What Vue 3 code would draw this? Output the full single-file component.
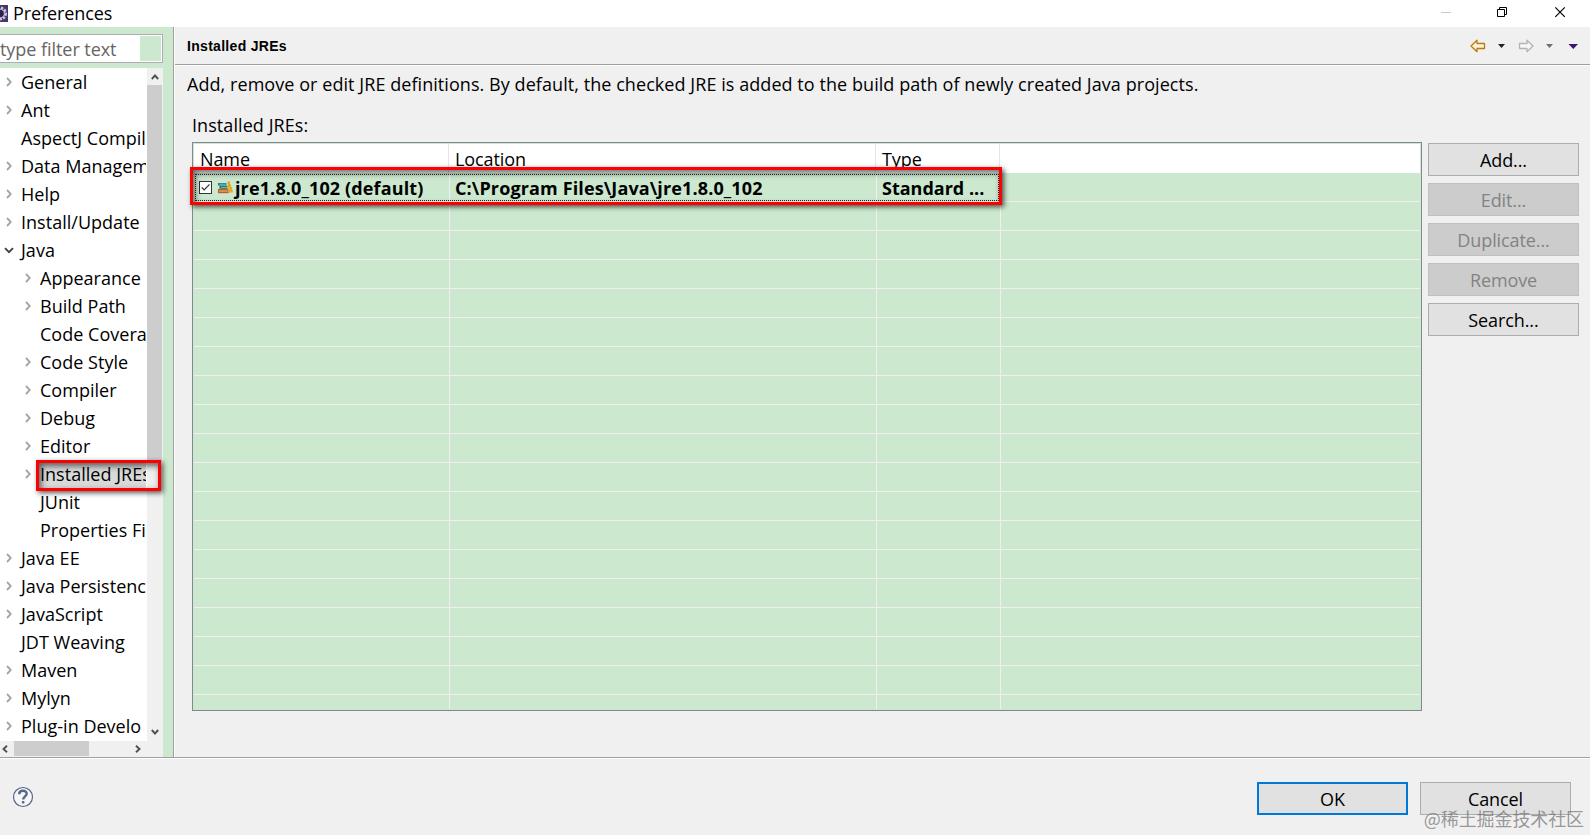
<template>
  <div class="window">
    <header class="title-bar">
      <svg class="app-icon" width="8" height="17" viewBox="0 0 8 17">
        <rect width="8" height="17" fill="#46366f" />
        <circle cx="0" cy="8.5" r="5.7" fill="none" stroke="#c9c5d4" stroke-width="2.6" stroke-dasharray="2.3 1.1" />
        <circle cx="0" cy="8.5" r="4.4" fill="#2c2255" stroke="#d8d5df" stroke-width="1" />
      </svg>
      <span class="title">Preferences</span>
      <svg class="window-controls" width="130" height="27" viewBox="0 0 130 27" fill="none">
        <path d="M1 12.5H11" stroke="#c9c9c9" />
        <path d="M57.5 9.5h7v7h-7zM59.5 9.5v-2h7v7h-2" stroke="#000" />
        <path d="M115.300 7.300l9.500 9.500M124.800 7.300l-9.500 9.500" stroke="#000" stroke-width="1.200" />
      </svg>
    </header>

    <main class="body">
      <aside class="sidebar">
        <div class="filter">
          <span class="filter-text">type filter text</span>
          <span class="filter-clear"></span>
        </div>
        <div class="tree-block">
          <ul class="tree">
            <li
                v-for="item in treeItems"
                :key="item.name"
                class="tree-item"
                :class="{ child: item.child, selected: item.selected }"
            >
              <span class="arrow">
                <svg v-if="item.arrow === 'open'" width="10" height="7" viewBox="0 0 10 7">
                  <path d="M1 1.200L5 5.200L9 1.200" fill="none" stroke="#404040" stroke-width="1.900" />
                </svg>
                <svg v-else-if="item.arrow !== 'none'" width="6" height="10" viewBox="0 0 6 10">
                  <path d="M1 1L4.800 5L1 9" fill="none" stroke="#a6a6a6" stroke-width="1.900" />
                </svg>
              </span>
              <span class="tree-name">{{ item.name }}</span>
            </li>
          </ul>
          <div class="v-scroll">
            <svg width="8" height="6" viewBox="0 0 8 6"><path d="M.8 5L4 1.500L7.200 5" /></svg>
            <div class="v-thumb"></div>
            <svg width="8" height="6" viewBox="0 0 8 6"><path d="M.8 1L4 4.500L7.200 1" /></svg>
          </div>
        </div>
        <div class="h-scroll">
          <svg width="6" height="8" viewBox="0 0 6 8"><path d="M5 .8L1.500 4L5 7.200" /></svg>
          <div class="h-thumb"></div>
          <svg width="6" height="8" viewBox="0 0 6 8"><path d="M1 .8L4.500 4L1 7.200" /></svg>
        </div>
        <div class="mark mark-tree"></div>
      </aside>

      <section class="content">
        <div class="page-header">
          <h1 class="page-title">Installed JREs</h1>
          <svg width="110" height="14" viewBox="0 0 110 14">
            <defs>
              <linearGradient id="back" x1="0" y1="0" x2="0" y2="1">
                <stop offset="0" stop-color="#fff" />
                <stop offset="1" stop-color="#ffe9a0" />
              </linearGradient>
            </defs>
            <path d="M1 7L7 1.300V4.500H14.500V9.500H7V12.700Z" fill="url(#back)" stroke="#b97a12" stroke-width="1.300" stroke-linejoin="round" />
            <path d="M28 5h7L31.500 9z" fill="#222" />
            <path d="M63 7L57 1.300V4.500H49.500V9.500H57V12.700Z" fill="#f7f7f7" stroke="#b3b3b3" stroke-width="1.300" stroke-linejoin="round" />
            <path d="M76 5h7L79.500 9z" fill="#6e6e6e" />
            <path d="M98.500 5h9.500L103.300 10z" fill="#3b176c" />
          </svg>
        </div>

        <p class="description">Add, remove or edit JRE definitions. By default, the checked JRE is added to the build path of newly created Java projects.</p>
        <p class="label">Installed JREs:</p>

        <div class="jre-block">
          <div class="table">
            <div class="row head">
              <span v-for="column in columns" :key="column" class="cell">{{ column }}</span>
            </div>
            <div class="row jre">
              <span class="cell name-cell">
                <svg width="13" height="13" viewBox="0 0 13 13">
                  <rect x=".5" y=".5" width="12" height="12" fill="#fff" stroke="#333" />
                  <path d="M2.700 6.300L5.200 8.900L10.500 3.400" fill="none" stroke="#333" stroke-width="1.200" />
                </svg>
                <svg class="books" width="16" height="13" viewBox="0 0 16 13">
                  <rect x="1" y="2" width="8.500" height="2.600" fill="#287ca1" />
                  <rect x="2.500" y="2.800" width="6" height=".9" fill="#72b6c3" />
                  <rect x="2.500" y="4.800" width="8" height="3" fill="#11805a" />
                  <rect x="4" y="5.800" width="6" height="1" fill="#79c196" />
                  <rect x="1" y="8" width="10.500" height="4.200" fill="#bd5c28" />
                  <rect x="2" y="9.300" width="8.500" height="1.500" fill="#e99a66" />
                  <path d="M11.300 .5L15.200 11.800" fill="none" stroke="#e69b0a" stroke-width="2.200" stroke-dasharray="2.400 .5" />
                  <path d="M11.800 3L10.600 8.500M12.300 8v4" fill="none" stroke="#e4a11b" stroke-width="1.400" />
                </svg>
                <span class="jre-name">jre1.8.0_102 (default)</span>
              </span>
              <span class="cell">C:\Program Files\Java\jre1.8.0_102</span>
              <span class="cell jre-type">Standard ...</span>
              <span class="cell"></span>
            </div>
            <div v-for="n in 18" :key="n" class="row">
              <span v-for="column in columns" :key="column" class="cell"></span>
            </div>
            <div class="mark mark-jre"></div>
          </div>

          <div class="actions">
            <button v-for="action in actions" :key="action.name" class="button" :disabled="action.disabled">{{ action.name }}</button>
          </div>
        </div>
      </section>
    </main>

    <footer class="footer">
      <svg class="help" width="22" height="22" viewBox="0 0 22 22">
        <circle cx="11" cy="11" r="9.500" fill="#f5f6f8" stroke="#566688" stroke-width="1.200" />
        <path d="M7.200 8.200C7.200 3.700 14.700 3.800 14.700 7.800C14.700 10.400 11.200 10.400 11.200 13.500" fill="none" stroke="#566688" stroke-width="2.400" />
        <rect x="9.800" y="15" width="2.700" height="2.600" rx="1" fill="#566688" />
      </svg>
      <div class="footer-buttons">
        <button class="button primary">OK</button>
        <button class="button">Cancel</button>
      </div>
      <span class="watermark">@稀土掘金技术社区</span>
    </footer>
  </div>
</template>

<script setup>
const treeItems = [
  { name: 'General' },
  { name: 'Ant' },
  { name: 'AspectJ Compiler', arrow: 'none' },
  { name: 'Data Management' },
  { name: 'Help' },
  { name: 'Install/Update' },
  { name: 'Java', arrow: 'open' },
  { name: 'Appearance', child: true },
  { name: 'Build Path', child: true },
  { name: 'Code Coverage', child: true, arrow: 'none' },
  { name: 'Code Style', child: true },
  { name: 'Compiler', child: true },
  { name: 'Debug', child: true },
  { name: 'Editor', child: true },
  { name: 'Installed JREs', child: true, selected: true },
  { name: 'JUnit', child: true, arrow: 'none' },
  { name: 'Properties Files', child: true, arrow: 'none' },
  { name: 'Java EE' },
  { name: 'Java Persistence' },
  { name: 'JavaScript' },
  { name: 'JDT Weaving', arrow: 'none' },
  { name: 'Maven' },
  { name: 'Mylyn' },
  { name: 'Plug-in Develo' }
]

const columns = ['Name', 'Location', 'Type', '']

const actions = [
  { name: 'Add...', disabled: false },
  { name: 'Edit...', disabled: true },
  { name: 'Duplicate...', disabled: true },
  { name: 'Remove', disabled: true },
  { name: 'Search...', disabled: false }
]
</script>

<style>
body {
  margin: 0;
  overflow: hidden;
}
</style>

<style scoped>
.window {
  width: 1590px;
  height: 835px;
  display: flex;
  flex-direction: column;
  overflow: hidden;
  background: #f0f0f0;
  color: #000;
  font-family: "Open Sans", sans-serif;
  font-size: 18px;
  letter-spacing: -0.1px;
  line-height: 28px;
  white-space: nowrap;
}

.window * {
  box-sizing: border-box;
}

svg {
  display: block;
  flex: none;
}

.title-bar {
  height: 27px;
  flex: none;
  display: flex;
  align-items: center;
  background: #fff;
}

.title {
  margin-left: 5px;
  padding-bottom: 2px;
}

.window-controls {
  margin-left: auto;
  margin-right: 20px;
}

.body {
  height: 730px;
  display: flex;
}

.sidebar {
  position: relative;
  width: 174px;
  flex: none;
  padding-top: 7px;
  background: #cce8cf;
  border-right: 1px solid #a0a0a0;
}

.filter {
  width: 163px;
  height: 29px;
  display: flex;
  justify-content: space-between;
  padding: 1px;
  border: 1px solid #abadb3;
  border-left: none;
  background: #fff;
  color: #666;
}

.filter-text {
  margin-left: -1px;
  line-height: 27px;
  letter-spacing: -0.05px;
}

.filter-clear {
  width: 21px;
  background: #cce8cf;
}

.tree-block {
  width: 163px;
  height: 673px;
  margin-top: 5px;
  display: flex;
  background: #f0f0f0;
}

.tree {
  width: 147px;
  margin: 0;
  padding: 0 1px 0 0;
  overflow: hidden;
  list-style: none;
  background: #fff;
  letter-spacing: 0.02px;
}

.tree-item {
  height: 28px;
  display: flex;
  align-items: center;
  padding-left: 4px;
  overflow: hidden;
}

.tree-item.child {
  padding-left: 23px;
}

.arrow {
  width: 10px;
  flex: none;
  display: flex;
  justify-content: center;
}

.tree-name {
  padding-left: 7px;
}

.selected .tree-name {
  margin-left: 5px;
  padding-left: 2px;
  background: #d9d9d9;
}

.v-scroll {
  width: 16px;
  display: flex;
  flex-direction: column;
  align-items: center;
  padding: 6px 0;
}

.v-scroll path,
.h-scroll path {
  fill: none;
  stroke: #505050;
  stroke-width: 1.9;
}

.v-thumb {
  width: 15px;
  height: 378px;
  margin: 5px 1px auto 0;
  background: #cdcdcd;
}

.h-scroll {
  width: 163px;
  height: 15px;
  display: flex;
  align-items: center;
  padding: 0 22px 0 2px;
  background: #f0f0f0;
  box-shadow: 0 1px #f0f0f0;
}

.h-thumb {
  width: 75px;
  height: 15px;
  margin: 0 auto 0 6px;
  background: #cdcdcd;
}

.content {
  flex: 1;
  border-left: 1px solid #fff;
}

.page-header {
  height: 39px;
  display: flex;
  align-items: center;
  justify-content: space-between;
  padding: 0 10px 0 12px;
  border-bottom: 1px solid #fff;
  box-shadow: inset 0 -1px #a0a0a0;
}

.page-title {
  margin: 0;
  font: bold 14px/20px "Liberation Sans", sans-serif;
  letter-spacing: 0.3px;
}

.description {
  margin: 4px 0 0 12px;
  letter-spacing: 0.062px;
}

.label {
  margin: 13px 0 0 17px;
  letter-spacing: 0.07px;
}

.jre-block {
  display: flex;
  gap: 6px;
  margin: 3px 0 0 17px;
}

.table {
  position: relative;
  width: 1230px;
  height: 569px;
  padding: 1px;
  display: flex;
  flex-direction: column;
  border: 1px solid #828790;
  background: #cce8cf;
}

.row {
  height: 29px;
  flex: none;
  display: grid;
  grid-template-columns: 256px 427px 124px 1fr;
  border-bottom: 1px solid #f0f0f0;
}

.row:nth-last-child(2) {
  height: 14px;
  border-bottom: none;
}

.cell {
  padding-left: 5px;
  border-right: 1px solid #f0f0f0;
  overflow: hidden;
}

.cell:last-child {
  border-right: none;
}

.head {
  grid-template-columns: 255px 427px 124px 1fr;
  border-bottom: none;
  background: #fff;
}

.head .cell {
  padding-left: 6px;
  padding-top: 1px;
  border-right-color: #e5e5e5;
}

.jre {
  font-weight: bold;
  letter-spacing: 0.13px;
  line-height: 30px;
}

.name-cell {
  display: flex;
  align-items: center;
}

.books {
  margin-left: 5px;
}

.jre-name {
  padding: 2px 0 0 2px;
}

.jre-type {
  letter-spacing: 0;
}

.actions {
  display: flex;
  flex-direction: column;
  gap: 7px;
  padding-top: 1px;
}

.button {
  width: 151px;
  height: 33px;
  padding: 0;
  border: 1px solid #adadad;
  background: #e1e1e1;
  color: #000;
  font: inherit;
  letter-spacing: inherit;
}

.button:disabled {
  border-color: #bfbfbf;
  background: #ccc;
  color: #838383;
}

.button.primary {
  border: 2px solid #0078d7;
}

/* red frames over the selected items */
.mark {
  position: absolute;
  border: 3px solid #f00;
  box-shadow: 2px 2px 5px rgba(0, 0, 0, 0.65), inset 2px 3px 6px rgba(0, 0, 0, 0.6);
}

.mark-tree {
  left: 36px;
  top: 433px;
  width: 125px;
  height: 31px;
}

.mark-jre {
  left: -3px;
  top: 24px;
  width: 812px;
  height: 38px;
}

.mark-jre::after {
  content: "";
  position: absolute;
  inset: 4px 0 1px 2px;
  border: 1px dotted #222;
}

.footer {
  position: relative;
  height: 78px;
  display: flex;
  justify-content: space-between;
  border-top: 1px solid #a0a0a0;
  box-shadow: inset 0 1px #fff;
}

.help {
  margin: 28px 0 0 12px;
}

.footer-buttons {
  display: flex;
  gap: 12px;
  padding: 24px 19px 0 0;
}

.watermark {
  position: absolute;
  right: 6px;
  bottom: 3px;
  color: rgba(100, 100, 100, 0.65);
  font: 18px/28px "Noto Sans CJK SC", sans-serif;
  letter-spacing: -0.1px;
}
</style>
